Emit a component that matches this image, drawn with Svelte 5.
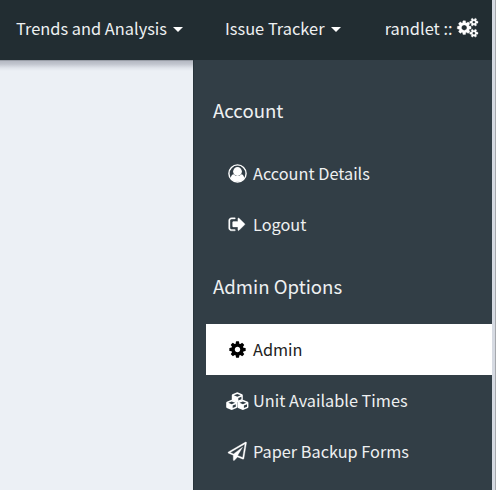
<script>
  const cog = 'M1152 896q0-106-75-181t-181-75-181 75-75 181 75 181 181 75 181-75 75-181zm512-109v222q0 12-8 23t-20 13l-185 28q-19 54-39 91 35 50 107 138 10 12 10 25t-9 23q-27 37-99 108t-94 71q-12 0-26-9l-138-108q-44 23-91 38-16 136-29 186-7 28-36 28h-222q-14 0-24.5-8.5t-11.5-21.5l-28-184q-49-16-90-37l-141 107q-10 9-25 9-14 0-25-11-126-114-165-168-7-10-7-23 0-12 8-23 15-21 51-66.5t54-70.5q-27-50-41-99l-183-27q-13-2-21-12.5t-8-23.5v-222q0-12 8-23t19-13l186-28q14-46 39-92-40-57-107-138-10-12-10-24 0-10 9-23 26-36 98.5-107.5t94.5-71.5q13 0 26 10l138 107q44-23 91-38 16-136 29-186 7-28 36-28h222q14 0 24.5 8.5t11.5 21.5l28 184q49 16 90 37l142-107q9-9 24-9 13 0 25 10 129 119 165 170 7 8 7 22 0 12-8 23-15 21-51 66.5t-54 70.5q26 50 41 98l183 28q13 2 21 12.5t8 23.5z';
  const cogs = 'M832 896q0-106-75-181t-181-75-181 75-75 181 75 181 181 75 181-75 75-181zm768 512q0-52-38-90t-90-38-90 38-38 90q0 53 37.5 90.5t90.5 37.5 90.5-37.5 37.5-90.5zm0-1024q0-52-38-90t-90-38-90 38-38 90q0 53 37.5 90.5t90.5 37.5 90.5-37.5 37.5-90.5zm-384 421v185q0 10-7 19.5t-16 10.5l-155 24q-11 35-32 76 34 48 90 115 7 11 7 20 0 12-7 19-23 30-82.5 89.5t-78.5 59.5q-11 0-21-7l-115-90q-37 19-77 31-11 108-23 155-7 24-30 24h-186q-11 0-20-7.5t-10-17.5l-23-153q-34-10-75-31l-118 89q-7 7-20 7-11 0-21-8-144-133-144-160 0-9 7-19 10-14 41-53t47-61q-23-44-35-82l-152-24q-10-1-17-9.5t-7-19.5v-185q0-10 7-19.5t16-10.5l155-24q11-35 32-76-34-48-90-115-7-11-7-20 0-12 7-20 22-30 82-89t79-59q11 0 21 7l115 90q34-18 77-32 11-108 23-154 7-24 30-24h186q11 0 20 7.5t10 17.5l23 153q34 10 75 31l118-89q8-7 20-7 11 0 21 8 144 133 144 160 0 8-7 19-12 16-42 54t-45 60q23 48 34 82l152 23q10 2 17 10.5t7 19.5zm640 533v140q0 16-149 31-12 27-30 52 51 113 51 138 0 4-4 7-122 71-124 71-8 0-46-47t-52-68q-20 2-30 2t-30-2q-14 21-52 68t-46 47q-2 0-124-71-4-3-4-7 0-25 51-138-18-25-30-52-149-15-149-31v-140q0-16 149-31 13-29 30-52-51-113-51-138 0-4 4-7 4-2 35-20t59-34 30-16q8 0 46 46.5t52 67.5q20-2 30-2t30 2q51-71 92-112l6-2q4 0 124 70 4 3 4 7 0 25-51 138 17 23 30 52 149 15 149 31zm0-1024v140q0 16-149 31-12 27-30 52 51 113 51 138 0 4-4 7-122 71-124 71-8 0-46-47t-52-68q-20 2-30 2t-30-2q-14 21-52 68t-46 47q-2 0-124-71-4-3-4-7 0-25 51-138-18-25-30-52-149-15-149-31v-140q0-16 149-31 13-29 30-52-51-113-51-138 0-4 4-7 4-2 35-20t59-34 30-16q8 0 46 46.5t52 67.5q20-2 30-2t30 2q51-71 92-112l6-2q4 0 124 70 4 3 4 7 0 25-51 138 17 23 30 52 149 15 149 31z';
  const signOut = 'M704 1440q0 4 1 20t.5 26.5-3 23.5-10 19.5-20.5 6.5h-320q-119 0-203.5-84.5t-84.5-203.5v-704q0-119 84.5-203.5t203.5-84.5h320q13 0 22.5 9.5t9.5 22.5q0 4 1 20t.5 26.5-3 23.5-10 19.5-20.5 6.5h-320q-66 0-113 47t-47 113v704q0 66 47 113t113 47h312l11.5 1 11.5 3 8 5.5 7 9 2 13.5zm928-544q0 26-19 45l-544 544q-19 19-45 19t-45-19-19-45v-288h-448q-26 0-45-19t-19-45v-384q0-26 19-45t45-19h448v-288q0-26 19-45t45-19 45 19l544 544q19 19 19 45z';
  const plane = 'M1764 11q33 24 27 64l-256 1536q-5 29-32 45-14 8-31 8-11 0-24-5l-527-215-298 327q-18 21-47 21-14 0-23-4-19-7-30-23.5t-11-36.5v-452l-472-193q-37-14-40-55-3-39 32-59l1664-960q35-21 68 2zm-342 1499l221-1323-1434 827 336 137 863-639-478 797z';

  const sections = [
    { title: 'Account', items: [
      { label: 'Account Details', icon: 'user' },
      { label: 'Logout', icon: 'logout' }
    ] },
    { title: 'Admin Options', items: [
      { label: 'Admin', icon: 'cog', active: true },
      { label: 'Unit Available Times', icon: 'cubes' },
      { label: 'Paper Backup Forms', icon: 'plane' }
    ] }
  ];
</script>

{#snippet cube(x, y)}
  <g transform="translate({x} {y})">
    <path fill-rule="evenodd" d="M0 2.6Q0 2 .6 1.7L4.8-.1Q5.5-.4 6.2-.1L10.4 1.7Q11 2 11 2.6V7Q11 7.6 10.4 7.9L6.2 9.7Q5.5 10 4.8 9.7L.6 7.9Q0 7.6 0 7ZM2.1 2.7 5.5 4.1 8.9 2.7 5.5 1.3ZM6.5 5.4V8L9.6 6.6V4.1Z" />
  </g>
{/snippet}

<div class="page">
  <div class="app">
    <header>
      <a class="trends">Trends and Analysis<i class="caret"></i></a>
      <a class="issues">Issue Tracker<i class="caret"></i></a>
      <a class="account">randlet ::<svg class="cogs" viewBox="0 0 1856 1792"><path d={cogs} stroke="currentColor" stroke-width="30" /></svg></a>
    </header>
    <div class="body">
      <main></main>
      <aside>
        {#each sections as section}
          <h3>{section.title}</h3>
          <nav>
            {#each section.items as item}
              <a class="item" class:active={item.active}>
                <span class="icon">
                  {#if item.icon === 'user'}
                    <svg width="19" height="19" viewBox="0 0 19 19">
                      <circle cx="9.5" cy="9.5" r="8.6" fill="none" stroke="currentColor" stroke-width="1.4" />
                      <circle cx="9.5" cy="7.5" r="4.4" />
                      <path d="M2.7 14.3C3.1 11.5 4.3 10.3 5.6 10.2Q9.5 14 13.4 10.2C14.7 10.3 15.9 11.5 16.3 14.3A8.4 8.4 0 0 1 2.7 14.3Z" />
                    </svg>
                  {:else if item.icon === 'logout'}
                    <svg width="18.5" height="18.5" viewBox="0 0 1792 1792"><path d={signOut} stroke="currentColor" stroke-width="35" /></svg>
                  {:else if item.icon === 'cog'}
                    <svg width="19" height="19" viewBox="0 0 1792 1792"><path d={cog} /></svg>
                  {:else if item.icon === 'cubes'}
                    <svg class="cubes" width="23" height="19" viewBox="0 0 23 19">
                      {@render cube(5.8, 1.6)}
                      {@render cube(0.2, 9.1)}
                      {@render cube(11.4, 9.1)}
                    </svg>
                  {:else}
                    <svg width="18.5" height="18.5" viewBox="0 0 1792 1792"><path d={plane} stroke="currentColor" stroke-width="35" /></svg>
                  {/if}
                </span>
                <span class="label">{item.label}</span>
              </a>
            {/each}
          </nav>
        {/each}
      </aside>
    </div>
  </div>
  <div class="scroll"></div>
</div>

<style>
  .page {
    display: flex;
    width: 496px;
    height: 490px;
    overflow: hidden;
    font-family: "Noto Sans CJK SC", "Open Sans", sans-serif;
    font-size: 16.4px;
    color: #eef0f1;
  }
  .app { width: 492px; display: flex; flex-direction: column; }
  .scroll { box-sizing: border-box; width: 4px; background: #d6dae2; border-right: 1px solid #a5a8ad; }
  header {
    height: 60px;
    flex: none;
    display: flex;
    align-items: center;
    box-sizing: border-box;
    padding: 0 14px 5px 16px;
    background: #222d32;
    line-height: 24px;
    white-space: nowrap;
  }
  header a { display: flex; align-items: center; }
  .issues { margin-left: 42px; }
  .account { margin-left: auto; }
  .caret {
    margin: 4px 0 0 6px;
    border: 5px solid transparent;
    border-top-color: #fff;
    border-bottom: 0;
  }
  .cogs { width: 20px; height: 19.3px; margin-left: 5.5px; }
  svg { display: block; fill: currentColor; color: #fff; overflow: visible; }
  .body { display: flex; flex: 1; min-height: 0; }
  main {
    width: 193px;
    flex: none;
    background: linear-gradient(#7d838b 0, #b5b9c3 1px, #c1c5ce 4px, #e0e4eb 8px, #ecf0f5 11px);
  }
  aside { flex: 1; background: #323e46; border-left: 1px solid #28343b; box-sizing: border-box; }
  h3 {
    margin: 0;
    height: 74px;
    line-height: 72px;
    padding-left: 19px;
    font-size: 18.6px;
    font-weight: 400;
  }
  h3:first-child { height: 88px; line-height: 100px; }
  .item {
    display: flex;
    align-items: center;
    height: 51px;
    margin-left: 12px;
    padding-left: 20px;
    box-sizing: border-box;
  }
  .active { background: #fff; color: #222; }
  .active svg { color: #000; }
  .icon { width: 23px; margin-right: 4px; display: flex; justify-content: center; flex: none; }
  .label { padding-bottom: 2px; font-size: 16.3px; }
</style>
